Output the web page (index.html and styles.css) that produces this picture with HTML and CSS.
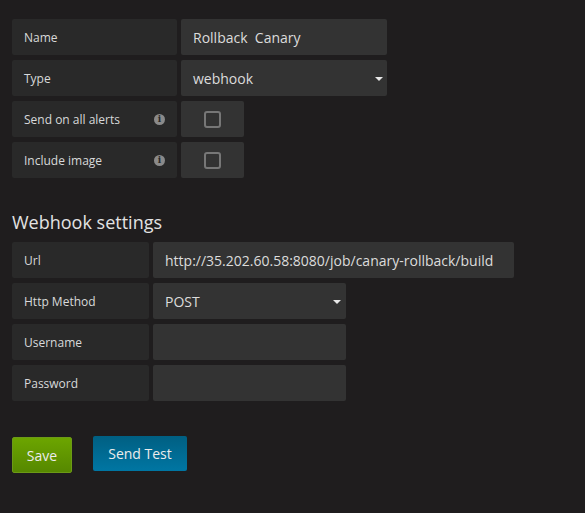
FILE: index.html
```html
<!DOCTYPE html>
<html>
<head>
<meta charset="utf-8">
<link rel="stylesheet" href="styles.css">
</head>
<body>
<div class="page">
  <div class="group">
    <div class="row">
      <div class="label w-lg">Name</div>
      <div class="field w-name">Rollback&nbsp; Canary</div>
    </div>
    <div class="row">
      <div class="label w-lg">Type</div>
      <div class="field select w-name">webhook<span class="caret"></span></div>
    </div>
    <div class="row">
      <div class="label w-lg">Send on all alerts<span class="info">i</span></div>
      <div class="field check"><span class="box"></span></div>
    </div>
    <div class="row">
      <div class="label w-lg">Include image<span class="info">i</span></div>
      <div class="field check"><span class="box"></span></div>
    </div>
  </div>

  <h3 class="heading">Webhook settings</h3>

  <div class="group">
    <div class="row">
      <div class="label w-md">Url</div>
      <div class="field w-url">http://35.202.60.58:8080/job/canary-rollback/build</div>
    </div>
    <div class="row">
      <div class="label w-md">Http Method</div>
      <div class="field select w-sel">POST<span class="caret"></span></div>
    </div>
    <div class="row">
      <div class="label w-md">Username</div>
      <div class="field w-sel"></div>
    </div>
    <div class="row">
      <div class="label w-md">Password</div>
      <div class="field w-sel"></div>
    </div>
  </div>

  <div class="actions">
    <button class="btn btn-save">Save</button>
    <button class="btn btn-test">Send Test</button>
  </div>
</div>
</body>
</html>
```

FILE: styles.css
```css
html, body {
  margin: 0;
  padding: 0;
  background: #1f1d1e;
  color: #d8d9da;
  font-family: "Open Sans", "Liberation Sans", sans-serif;
}

.page {
  padding: 19px 12px 0 12px;
}

.group {
  display: flex;
  flex-direction: column;
  gap: 5px;
}

.row {
  display: flex;
  gap: 4px;
}

.label {
  box-sizing: border-box;
  height: 36px;
  padding: 0 12px;
  background: #292929;
  display: flex;
  align-items: center;
  justify-content: space-between;
  font-size: 12px;
  color: #d8d9da;
  border-radius: 2px;
}

.w-lg { width: 165px; }
.w-md { width: 137px; }

.info {
  width: 11px;
  height: 11px;
  border-radius: 50%;
  background: #8a8a8a;
  color: #292929;
  font-size: 9px;
  font-weight: 700;
  line-height: 11px;
  text-align: center;
  font-family: "DejaVu Serif", serif;
}

.field {
  box-sizing: border-box;
  height: 36px;
  padding: 0 12px;
  background: #333333;
  display: flex;
  align-items: center;
  font-size: 14px;
  color: #dcdcdc;
  border-radius: 2px;
  position: relative;
}

.w-name { width: 206px; }
.w-url { width: 361px; }
.w-sel { width: 193px; }

.select .caret {
  position: absolute;
  right: 4px;
  top: 17px;
  width: 0;
  height: 0;
  border-left: 4px solid transparent;
  border-right: 4px solid transparent;
  border-top: 4px solid #e8e8e8;
}

.w-sel .caret { right: 5px; }

.check {
  width: 63px;
  justify-content: center;
}

.box {
  box-sizing: border-box;
  width: 17px;
  height: 17px;
  border: 2px solid #777;
  border-radius: 3px;
}

.heading {
  margin: 32px 0 8px 0;
  font-size: 18px;
  font-weight: 400;
  line-height: normal;
  color: #e3e3e3;
}

.actions {
  display: flex;
  align-items: flex-start;
  gap: 21px;
  margin-top: 35px;
}

.btn {
  font-family: "Open Sans", "Liberation Sans", sans-serif;
  font-size: 14px;
  color: #ececec;
  border: none;
  border-radius: 2px;
  padding: 0;
}

.btn-save {
  margin-top: 1px;
  width: 60px;
  height: 36px;
  background: linear-gradient(#6ca500, #568800);
  border: 1px solid #6c9a16;
  box-sizing: border-box;
}

.btn-test {
  width: 94px;
  height: 35px;
  background: linear-gradient(#005f82, #0076a3);
}
```
